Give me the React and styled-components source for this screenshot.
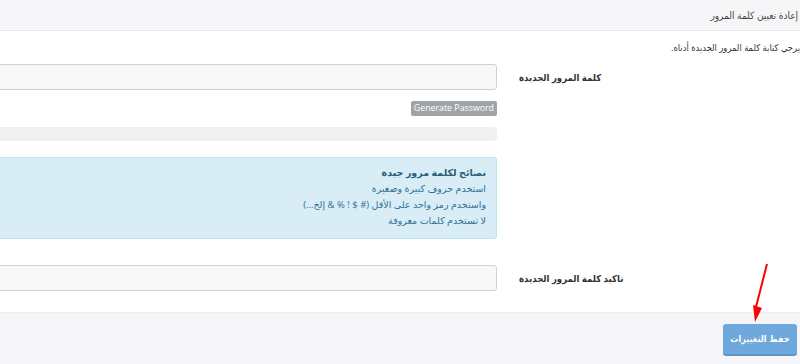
import styled, { createGlobalStyle } from 'styled-components'

const Global = createGlobalStyle`
  html, body {
    margin: 0;
    padding: 0;
    background: #fff;
    overflow: hidden;
  }
  body {
    font-family: "Open Sans", "DejaVu Sans Condensed", "DejaVu Sans", sans-serif;
    color: #333;
  }
`

const Panel = styled.div`
  direction: rtl;
  width: 812px;
  margin-left: -12px;
  height: 364px;
  display: flex;
  flex-direction: column;
`

const Heading = styled.div`
  height: 30px;
  background: #f6f6f8;
  border-bottom: 1px solid #e7e7ee;
  display: flex;
  align-items: center;
  padding-right: 2px;
  font-size: 10px;
  color: #444;
`

const Body = styled.div`
  padding: 9px 0 21px 0;
  display: flex;
  flex-direction: column;
`

const Intro = styled.p`
  margin: 0 0 8px;
  font-size: 9.3px;
  line-height: 16px;
  color: #333;
`

const Row = styled.div`
  display: grid;
  grid-template-columns: 303px 1fr;
  align-items: ${p => (p.$top ? 'start' : 'center')};
  margin-top: ${p => p.$gap || 0}px;
`

const Label = styled.label`
  text-align: left;
  padding-left: 22px;
  font-size: 9.5px;
  font-weight: bold;
  color: #333;
  margin-top: ${p => p.$offset || 0}px;
`

const Field = styled.div`
  display: flex;
  flex-direction: column;
  align-items: flex-start;
`

const Input = styled.input`
  box-sizing: border-box;
  width: 100%;
  height: 26px;
  border: 1px solid #d2d2d2;
  border-radius: 3px;
  background: #f8f8f8;
  outline: none;
`

const GenButton = styled.button`
  margin-top: 11px;
  height: 15px;
  padding: 0 3px;
  border: 0;
  border-radius: 2px;
  background: #a0a4a8;
  color: #fff;
  font-family: "Open Sans", sans-serif;
  font-size: 8.8px;
  line-height: 15px;
  direction: ltr;
`

const Progress = styled.div`
  margin-top: 11px;
  width: 100%;
  height: 14px;
  border-radius: 4px;
  background: #f0f0f0;
`

const Alert = styled.div`
  box-sizing: border-box;
  height: 82px;
  padding: 7px 10px 0;
  background: #d9edf7;
  border: 1px solid #bde4f0;
  border-radius: 3px;
  color: #31708f;
  font-family: "Open Sans", "DejaVu Sans", sans-serif;
  font-size: 9.5px;
  line-height: 16px;
`

const AlertTitle = styled.div`
  font-weight: bold;
  color: #2b5f7a;
`

const Footer = styled.div`
  position: relative;
  flex: 1;
  background: #f6f6f8;
  border-top: 1px solid #eeeef3;
  padding: 11px 3px 0 0;
  display: flex;
  align-items: flex-start;
`

const SaveButton = styled.button`
  width: 74px;
  height: 32px;
  padding: 0;
  border: 0;
  border-bottom: 2px solid #5d93c6;
  border-radius: 3px;
  background: #6ea8dd;
  color: #fff;
  font-family: "DejaVu Sans Condensed", "DejaVu Sans", sans-serif;
  font-size: 9px;
  font-weight: bold;
  white-space: nowrap;
`

const Arrow = styled.svg`
  position: absolute;
  left: 0;
  top: -54px;
  width: 812px;
  height: 70px;
  pointer-events: none;
`

export default function App() {
  return (
    <>
      <Global />
      <Panel>
        <Heading>إعادة تعيين كلمة المرور</Heading>
        <Body>
          <Intro>يرجي كتابة كلمة المرور الجديدة أدناه.</Intro>
          <Row $top>
            <Label $offset={7}>كلمة المرور الجديدة</Label>
            <Field>
              <Input type="password" />
              <GenButton>Generate Password</GenButton>
              <Progress />
            </Field>
          </Row>
          <Row $gap={16}>
            <span />
            <Alert>
              <AlertTitle>نصائح لكلمة مرور جيدة</AlertTitle>
              <div>استخدم حروف كبيرة وصغيرة</div>
              <div>واستخدم رمز واحد على الأقل (# $ ! % &amp; إلخ...)</div>
              <div>لا تستخدم كلمات معروفة</div>
            </Alert>
          </Row>
          <Row $gap={26}>
            <Label>تاكيد كلمة المرور الجديدة</Label>
            <Input type="password" />
          </Row>
        </Body>
        <Footer>
          <SaveButton>حفظ التغييرات</SaveButton>
          <Arrow viewBox="0 0 812 70">
            <line x1="779" y1="5" x2="768" y2="48" stroke="#f00" strokeWidth="2" />
            <polygon points="765,46 774,49 767,63" fill="#f00" />
          </Arrow>
        </Footer>
      </Panel>
    </>
  )
}
